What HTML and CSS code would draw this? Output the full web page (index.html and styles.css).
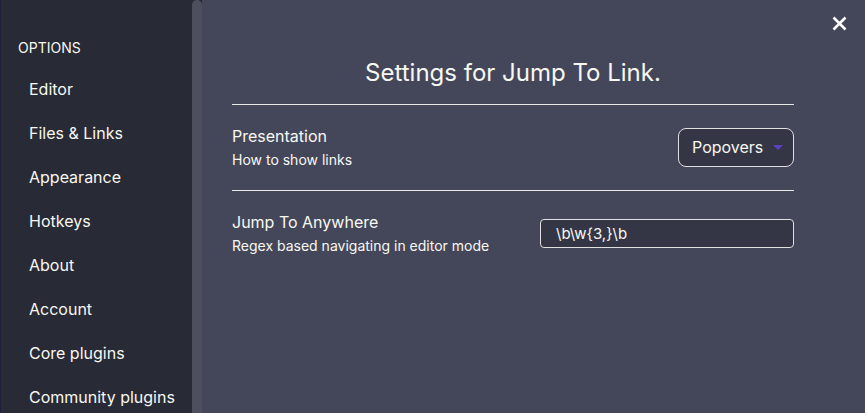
FILE: index.html
```html
<!DOCTYPE html>
<html>
<head>
<meta charset="utf-8">
<link rel="stylesheet" href="styles.css">
</head>
<body>
<div class="app">
  <nav class="sidebar">
    <div class="group-title">OPTIONS</div>
    <div class="nav-item">Editor</div>
    <div class="nav-item">Files &amp; Links</div>
    <div class="nav-item">Appearance</div>
    <div class="nav-item">Hotkeys</div>
    <div class="nav-item">About</div>
    <div class="nav-item">Account</div>
    <div class="nav-item">Core plugins</div>
    <div class="nav-item">Community plugins</div>
  </nav>
  <div class="scrollbar"><div class="thumb"></div></div>
  <main class="content">
    <div class="close">
      <svg width="15" height="15" viewBox="0 0 15 15"><path d="M1.5 1.5 L13.5 13.5 M13.5 1.5 L1.5 13.5" stroke="#ffffff" stroke-width="2.6" stroke-linecap="butt"/></svg>
    </div>
    <div class="panel">
      <h2 class="title">Settings for Jump To Link.</h2>
      <div class="setting">
        <div class="info">
          <div class="name">Presentation</div>
          <div class="desc">How to show links</div>
        </div>
        <div class="dropdown">Popovers <span class="caret"></span></div>
      </div>
      <div class="setting">
        <div class="info">
          <div class="name">Jump To Anywhere</div>
          <div class="desc">Regex based navigating in editor mode</div>
        </div>
        <div class="textbox">\b\w{3,}\b</div>
      </div>
    </div>
  </main>
</div>
</body>
</html>
```
FILE: styles.css
```css
html, body {
  margin: 0;
  padding: 0;
  height: 413px;
  overflow: hidden;
  background: #44475a;
  font-family: Inter, "Noto Sans", sans-serif;
  color: #f8f8f2;
}
.app {
  display: flex;
  height: 413px;
}
.sidebar {
  width: 192px;
  flex: none;
  background: #282a36;
  box-sizing: border-box;
  padding-top: 40px;
  border-left: 1px solid #1e1f3a;
}
.group-title {
  font-size: 14px;
  line-height: 16px;
  padding-left: 17px;
  color: #f8f8f2;
  margin-bottom: 11px;
}
.nav-item {
  font-size: 16px;
  line-height: 20px;
  padding: 12px 0 12px 28px;
  color: #f8f8f2;
  white-space: nowrap;
}
.scrollbar {
  width: 10px;
  flex: none;
  background: #282a36;
}
.thumb {
  height: 100%;
  background: #4d4f5e;
  border-radius: 5px 5px 0 0;
}
.content {
  flex: 1;
  background: #44475a;
  position: relative;
  padding: 0 71px 0 30px;
}
.close {
  position: absolute;
  right: 18px;
  top: 16px;
  width: 15px;
  height: 15px;
}
.close svg { display: block; }
.panel {
  display: flex;
  flex-direction: column;
}
.title {
  margin: 0;
  padding-top: 58px;
  padding-bottom: 17px;
  font-size: 24px;
  line-height: 29px;
  font-weight: 400;
  text-align: center;
  border-bottom: 1px solid #e8e8e8;
}
.setting {
  display: flex;
  align-items: center;
  justify-content: space-between;
  padding: 20px 0 21px;
  border-bottom: 1px solid #e8e8e8;
}
.setting:last-child { border-bottom: none; }
.name {
  font-size: 16px;
  line-height: 22px;
}
.desc {
  font-size: 14px;
  line-height: 18px;
  margin-top: 4px;
}
.dropdown {
  box-sizing: border-box;
  width: 116px;
  height: 39px;
  border: 1px solid #e0e0e0;
  border-radius: 8px;
  background: #343645;
  font-size: 16px;
  display: flex;
  align-items: center;
  padding-left: 13px;
  gap: 10px;
}
.caret {
  width: 0;
  height: 0;
  border-left: 5px solid transparent;
  border-right: 5px solid transparent;
  border-top: 5px solid #5a3fc0;
  margin-top: 1px;
}
.textbox {
  box-sizing: border-box;
  width: 254px;
  height: 29px;
  border: 1px solid #e0e0e0;
  border-radius: 4px;
  background: #343645;
  font-size: 15px;
  display: flex;
  align-items: center;
  padding-left: 15px;
}
```
